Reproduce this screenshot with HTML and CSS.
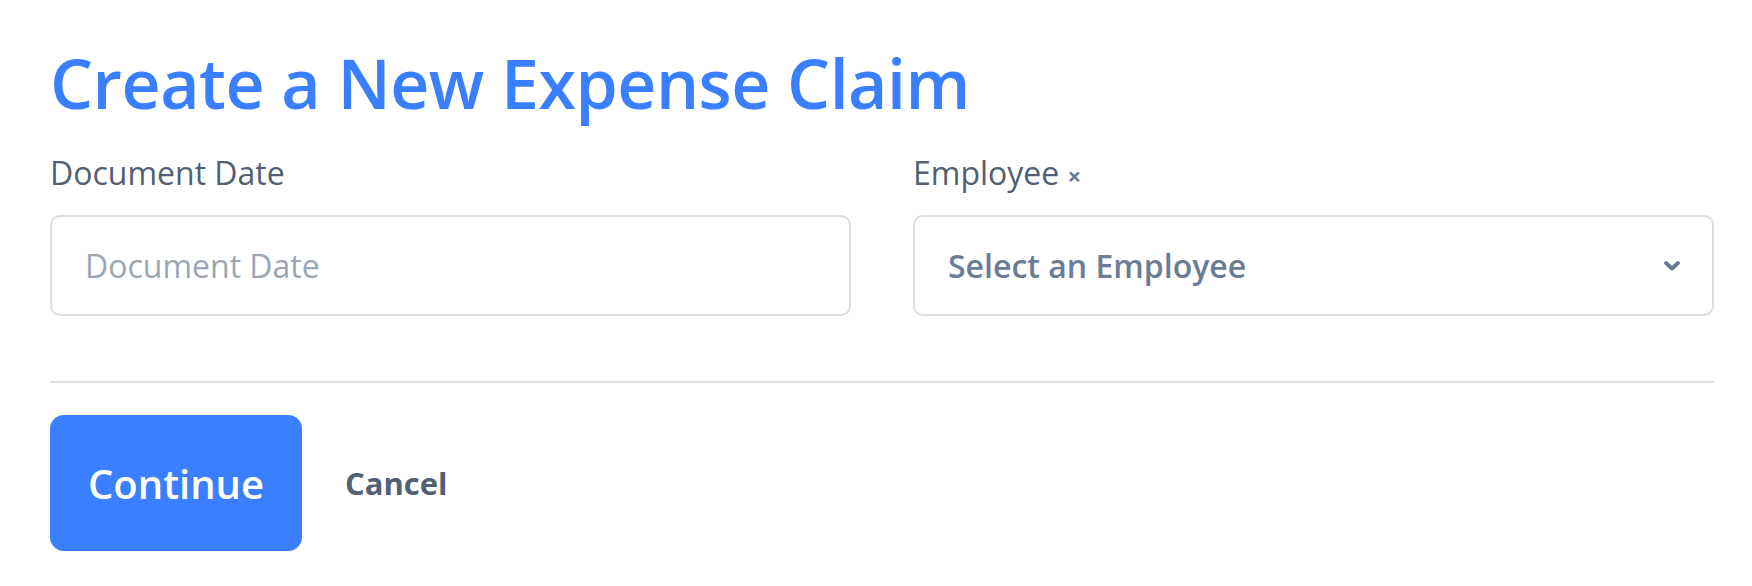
FILE: index.html
```html
<!DOCTYPE html>
<html lang="en">
<head>
	<meta charset="UTF-8">
	<meta name="viewport" content="width=device-width, initial-scale=1.0">
	<title>Create a New Expense Claim</title>
	<link rel="stylesheet" href="styles.css">
</head>
<body>
	<div class="page">
		<h1 class="title">Create a New Expense Claim</h1>
		<div class="fields">
			<div class="field">
				<label class="label" for="docDate">Document Date</label>
				<input class="input" id="docDate" type="text" placeholder="Document Date">
			</div>
			<div class="field">
				<label class="label">Employee <span class="required">&times;</span></label>
				<div class="select">
					<span class="select-text">Select an Employee</span>
					<svg class="chevron" width="18" height="12" viewBox="0 0 18 12">
						<path d="M3 3 L9 8.5 L15 3" fill="none" stroke="#6b7c93" stroke-width="4" stroke-linecap="round" stroke-linejoin="round"/>
					</svg>
				</div>
			</div>
		</div>
		<hr class="divider">
		<div class="actions">
			<button class="btn-primary">Continue</button>
			<button class="btn-link">Cancel</button>
		</div>
	</div>
</body>
</html>
```

FILE: styles.css
```css
:root {
	--blue: #3a7fff;
	--text: #525f74;
	--muted: #6b7c93;
	--border: #dedede;
}

body {
	margin: 0;
	background: #fff;
	font-family: "Open Sans", "Noto Sans", sans-serif;
}

.page {
	width: 1664px;
	padding: 43px 0 0 50px;
}

.title {
	margin: 0;
	font-size: 68px;
	line-height: 80px;
	font-weight: 600;
	letter-spacing: -0.5px;
	color: var(--blue);
}

.fields {
	display: grid;
	grid-template-columns: 1fr 1fr;
	column-gap: 62px;
	margin-top: 30px;
}

.field {
	display: flex;
	flex-direction: column;
}

.label {
	font-size: 32px;
	line-height: 40px;
	color: var(--text);
	margin-bottom: 22px;
}

.required {
	font-size: 24px;
	line-height: 1;
	font-weight: 700;
	color: var(--muted);
}

.input, .select {
	box-sizing: border-box;
	height: 101px;
	border: 2px solid var(--border);
	border-radius: 10px;
	padding: 0 31px 0 33px;
	font-family: inherit;
	font-size: 32px;
	color: var(--text);
	outline: none;
}

.input::placeholder {
	color: #9ba6b2;
}

.select {
	display: flex;
	align-items: center;
	justify-content: space-between;
}

.select-text {
	font-weight: 600;
	color: var(--muted);
}

.divider {
	margin: 65px 0 0;
	border: none;
	border-top: 2px solid var(--border);
}

.actions {
	display: flex;
	align-items: center;
	gap: 43px;
	margin-top: 32px;
}

.btn-primary {
	width: 252px;
	height: 136px;
	border: none;
	border-radius: 14px;
	background: var(--blue);
	color: #fff;
	font-family: inherit;
	font-size: 40px;
	font-weight: 600;
	cursor: pointer;
}

.btn-link {
	border: none;
	background: none;
	padding: 0;
	color: var(--text);
	font-family: inherit;
	font-size: 31px;
	font-weight: 700;
	cursor: pointer;
}
```
